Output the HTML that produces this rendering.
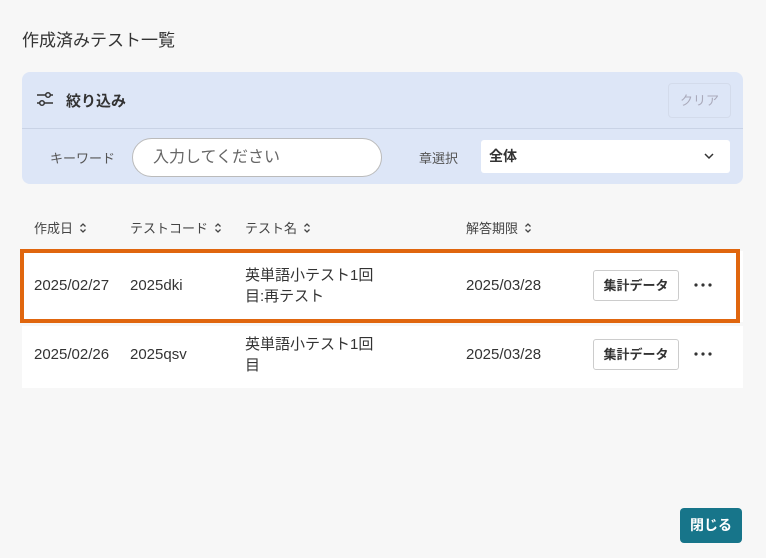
<!DOCTYPE html>
<html><head><meta charset="utf-8"><style>
*{box-sizing:border-box;margin:0;padding:0}
body{width:766px;height:558px;background:#f7f7f7;font-family:"Liberation Sans","Noto Sans CJK JP",sans-serif;color:#333;position:relative;overflow:hidden}
.abs{position:absolute}
.title{left:22px;top:26px;font-size:17px;color:#333}
.panel{left:22px;top:72px;width:721px;height:112px;background:#dde6f7;border-radius:8px}
.divider{left:22px;top:128px;width:721px;height:1px;background:#c9d3e6}
.ftitle{left:66px;top:90px;font-size:15px;font-weight:bold;color:#333}
.clear{left:668px;top:83px;width:63px;height:35px;border:1px solid #d3dbeb;border-radius:4px;font-size:13px;color:#aab;text-align:center;line-height:33px}
.kw{left:50px;top:148px;font-size:13px;color:#555}
.input{left:132px;top:138px;width:250px;height:39px;background:#fff;border:1px solid #bbb;border-radius:20px;font-size:16px;color:#666;padding-left:20px;line-height:37px}
.sel{left:419px;top:148px;font-size:13px;color:#555}
.select{left:481px;top:140px;width:249px;height:33px;background:#fff;border-radius:3px;font-size:14px;font-weight:bold;padding-left:8px;line-height:33px}
.th{top:218px;font-size:13px;color:#444;display:flex;align-items:center;gap:6px}
.row{left:22px;width:721px;background:#fff}
.td{font-size:15px;color:#333}
.btn{width:86px;height:31px;border:1px solid #ccc;border-radius:3px;background:#fff;font-size:13px;font-weight:bold;text-align:center;line-height:29px;color:#333}
.close{left:680px;top:508px;width:62px;height:35px;background:#17758a;border-radius:4px;color:#fff;font-weight:bold;font-size:14px;text-align:center;line-height:35px}
</style></head><body>
<div class="abs title">作成済みテスト一覧</div>
<div class="abs panel"></div>
<div class="abs divider"></div>
<svg class="abs" style="left:36px;top:91px" width="18" height="16" viewBox="0 0 18 16" fill="none" stroke="#333" stroke-width="1.5"><line x1="1" y1="4" x2="17" y2="4"/><line x1="1" y1="12" x2="17" y2="12"/><circle cx="12" cy="4" r="2.3" fill="#dde6f7"/><circle cx="6" cy="12" r="2.3" fill="#dde6f7"/></svg>
<div class="abs ftitle">絞り込み</div>
<div class="abs clear">クリア</div>
<div class="abs kw">キーワード</div>
<div class="abs input">入力してください</div>
<div class="abs sel">章選択</div>
<div class="abs select">全体</div>
<svg class="abs" style="left:703px;top:152px" width="12" height="8" viewBox="0 0 12 8" fill="none" stroke="#333" stroke-width="1.5"><path d="M2 2l4 4 4-4"/></svg>

<div class="abs th" style="left:34px">作成日 <svg width="8" height="12" viewBox="0 0 8 12" fill="none" stroke="#444" stroke-width="1.3"><path d="M1.5 4.5L4 2l2.5 2.5M1.5 7.5L4 10l2.5-2.5"/></svg></div>
<div class="abs th" style="left:130px">テストコード <svg width="8" height="12" viewBox="0 0 8 12" fill="none" stroke="#444" stroke-width="1.3"><path d="M1.5 4.5L4 2l2.5 2.5M1.5 7.5L4 10l2.5-2.5"/></svg></div>
<div class="abs th" style="left:245px">テスト名 <svg width="8" height="12" viewBox="0 0 8 12" fill="none" stroke="#444" stroke-width="1.3"><path d="M1.5 4.5L4 2l2.5 2.5M1.5 7.5L4 10l2.5-2.5"/></svg></div>
<div class="abs th" style="left:466px">解答期限 <svg width="8" height="12" viewBox="0 0 8 12" fill="none" stroke="#444" stroke-width="1.3"><path d="M1.5 4.5L4 2l2.5 2.5M1.5 7.5L4 10l2.5-2.5"/></svg></div>

<div class="abs row" style="top:251px;height:71px"></div>
<div class="abs" style="left:20px;top:249px;width:720px;height:74px;border:4px solid #e0660e"></div>
<div class="abs td" style="left:34px;top:277px">2025/02/27</div>
<div class="abs td" style="left:130px;top:277px">2025dki</div>
<div class="abs td" style="left:245px;top:265px;line-height:21px">英単語小テスト1回<br>目:再テスト</div>
<div class="abs td" style="left:466px;top:277px">2025/03/28</div>
<div class="abs btn" style="left:593px;top:270px">集計データ</div>
<svg class="abs" style="left:694px;top:283px" width="18" height="4"><circle cx="2" cy="2" r="1.6" fill="#333"/><circle cx="9" cy="2" r="1.6" fill="#333"/><circle cx="16" cy="2" r="1.6" fill="#333"/></svg>

<div class="abs row" style="top:326px;height:62px"></div>
<div class="abs td" style="left:34px;top:346px">2025/02/26</div>
<div class="abs td" style="left:130px;top:346px">2025qsv</div>
<div class="abs td" style="left:245px;top:334px;line-height:21px">英単語小テスト1回<br>目</div>
<div class="abs td" style="left:466px;top:346px">2025/03/28</div>
<div class="abs btn" style="left:593px;top:339px">集計データ</div>
<svg class="abs" style="left:694px;top:352px" width="18" height="4"><circle cx="2" cy="2" r="1.6" fill="#333"/><circle cx="9" cy="2" r="1.6" fill="#333"/><circle cx="16" cy="2" r="1.6" fill="#333"/></svg>

<div class="abs close">閉じる</div>
</body></html>
